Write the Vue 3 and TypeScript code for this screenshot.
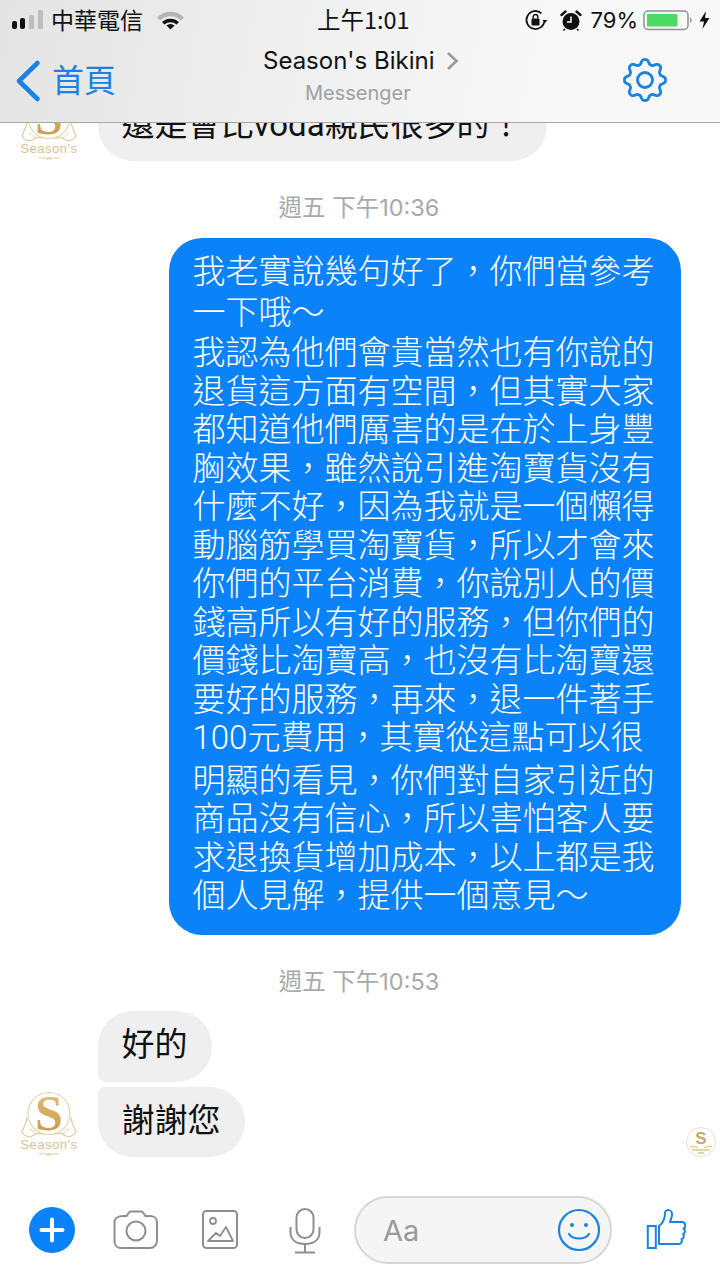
<script setup lang="ts">
const sentLines: { text: string; wide?: boolean; wider?: boolean }[] = [
  { text: '我老實說幾句好了，你們當參考' },
  { text: '一下哦～', wide: true },
  { text: '我認為他們會貴當然也有你說的', wide: true },
  { text: '退貨這方面有空間，但其實大家' },
  { text: '都知道他們厲害的是在於上身豐' },
  { text: '胸效果，雖然說引進淘寶貨沒有' },
  { text: '什麼不好，因為我就是一個懶得' },
  { text: '動腦筋學買淘寶貨，所以才會來' },
  { text: '你們的平台消費，你說別人的價' },
  { text: '錢高所以有好的服務，但你們的' },
  { text: '價錢比淘寶高，也沒有比淘寶還' },
  { text: '要好的服務，再來，退一件著手' },
  { text: '100元費用，其實從這點可以很' },
  { text: '明顯的看見，你們對自家引近的', wider: true },
  { text: '商品沒有信心，所以害怕客人要' },
  { text: '求退換貨增加成本，以上都是我' },
  { text: '個人見解，提供一個意見～' }
]

function gearPath(cx: number, cy: number): string {
  const pts: string[] = []
  const n = 160
  for (let i = 0; i < n; i++) {
    const t = (i / n) * Math.PI * 2
    const wave = Math.max(-0.75, Math.min(0.75, Math.cos(8 * t)))
    const r = 18.3 + 2.9 * wave
    const x = cx + r * Math.sin(t)
    const y = cy - r * Math.cos(t)
    pts.push(`${i === 0 ? 'M' : 'L'}${x.toFixed(2)} ${y.toFixed(2)}`)
  }
  return pts.join(' ') + ' Z'
}
const gear = gearPath(25, 25)
</script>

<template>
  <div class="page">
    <svg class="defs" width="0" height="0" aria-hidden="true">
      <defs>
        <linearGradient id="gold" x1="0" y1="0" x2="0" y2="1">
          <stop offset="0" stop-color="#e6c27e" />
          <stop offset="1" stop-color="#c3964a" />
        </linearGradient>
        <symbol id="logo" viewBox="0 0 60 68">
          <circle cx="29" cy="24.500" r="21" fill="#fff" stroke="#e6d3ad" stroke-width="1.200" />
          <text x="29" y="41" text-anchor="middle" class="logo-s" fill="url(#gold)">S</text>
          <path d="M7 28c0 6-3 9-5 15 3 5 8 6 12 3 3-2 4-2 9-1M51 28c0 6 3 9 5 15-3 5-8 6-12 3-3-2-4-2-9-1" fill="none" stroke="#e3cd9f" stroke-width="1.300" />
          <path d="M9 40c3 1 5 3 6 6M49 40c-3 1-5 3-6 6" fill="none" stroke="#e6d3ad" stroke-width="1" />
          <text x="29" y="60" text-anchor="middle" class="logo-name" fill="#d9c18f">Season's</text>
          <path d="M19 65h20M27 67l2-3 2 3" fill="none" stroke="#e3cd9f" stroke-width="1" />
        </symbol>
      </defs>
    </svg>

    <header class="topbar">
      <div class="status">
        <div class="status-left">
          <svg class="signal" width="32" height="20" viewBox="0 0 32 20">
            <rect x="0" y="11" width="5" height="8" rx="2" fill="#111" />
            <rect x="8" y="8" width="5" height="11" rx="2" fill="#111" />
            <rect x="17" y="5" width="5" height="14" rx="1.500" fill="#bdbdbd" />
            <rect x="26" y="0" width="5" height="19" rx="1.500" fill="#bdbdbd" />
          </svg>
          <span class="carrier">中華電信</span>
          <svg class="wifi" width="27" height="20" viewBox="0 0 27 20">
            <path d="M0 7.500a19 19 0 0 1 27 0l-3 3a15 15 0 0 0-21 0z" fill="#b4b4b4" />
            <path d="M5 12a12.500 12.500 0 0 1 17 0l-2.500 2.500a9 9 0 0 0-12 0z" fill="#111" />
            <path d="M9.500 15.500a6 6 0 0 1 8 0l-4 4z" fill="#111" />
          </svg>
        </div>
        <span class="clock">上午1:01</span>
        <div class="status-right">
          <svg class="lock" width="24" height="24" viewBox="0 0 24 24">
            <path d="M20.500 12a9 9 0 1 1-3-6.700" fill="none" stroke="#111" stroke-width="1.800" />
            <path d="M18.500 12h5l-2.500 3z" fill="#111" />
            <rect x="7.500" y="10.500" width="8" height="7" rx="1" fill="#111" />
            <path d="M9.200 10.500V8.800a2.300 2.300 0 0 1 4.600 0v1.700" fill="none" stroke="#111" stroke-width="1.500" />
          </svg>
          <svg class="alarm" width="22" height="22" viewBox="0 0 22 22">
            <circle cx="11" cy="12.500" r="8.500" fill="#111" />
            <path d="M11 7.500v5.500H7" fill="none" stroke="#fff" stroke-width="1.500" />
            <path d="M1.500 6l4-3.500M20.500 6l-4-3.500" stroke="#111" stroke-width="2.400" stroke-linecap="round" />
            <path d="M5 20l-1.500 1.500M17 20l1.500 1.500" stroke="#111" stroke-width="1.600" />
          </svg>
          <span class="percent">79%</span>
          <svg class="battery" width="50" height="21" viewBox="0 0 50 21">
            <rect x="1" y="1" width="44" height="18.500" rx="4" fill="none" stroke="#8f8f8f" stroke-width="1.500" />
            <rect x="4" y="4" width="30.500" height="12.500" rx="1" fill="#4cd964" />
            <path d="M47 7.500c2 .5 2 5 0 5.500z" fill="#8f8f8f" />
          </svg>
          <svg class="bolt" width="11" height="18" viewBox="0 0 11 18">
            <path d="M7 0L0.500 10.500H5L3.500 18L10.500 7H6z" fill="#111" />
          </svg>
        </div>
      </div>
      <div class="nav">
        <div class="back">
          <svg width="28" height="44" viewBox="0 0 28 44">
            <path d="M23.500 4L5 22 23.500 40" fill="none" stroke="#1a82e2" stroke-width="4.600" stroke-linecap="round" stroke-linejoin="round" />
          </svg>
          <span class="back-label">首頁</span>
        </div>
        <div class="title">
          <div class="name">Season's Bikini
            <svg width="13" height="20" viewBox="0 0 13 20">
              <path d="M2 2l8.500 8L2 18" fill="none" stroke="#9a9a9a" stroke-width="2.600" />
            </svg>
          </div>
          <div class="sub">Messenger</div>
        </div>
        <svg class="gear" width="50" height="50" viewBox="0 0 50 50">
          <path :d="gear" fill="none" stroke="#1a82e2" stroke-width="2.800" stroke-linejoin="round" />
          <circle cx="25" cy="25" r="7.500" fill="none" stroke="#1a82e2" stroke-width="2.800" />
        </svg>
      </div>
    </header>

    <main class="chat">
      <div class="row">
        <svg class="avatar" width="60" height="68"><use href="#logo" /></svg>
        <div class="bubble">還是會比voda親民很多的！</div>
      </div>

      <div class="time">週五 下午10:36</div>

      <div class="sent">
        <div
          v-for="(line, i) in sentLines"
          :key="i"
          class="sent-line"
          :class="{ wide: line.wide, wider: line.wider }"
        >{{ line.text }}</div>
      </div>

      <div class="time second">週五 下午10:53</div>

      <div class="row">
        <svg class="avatar" width="60" height="68"><use href="#logo" /></svg>
        <div class="group">
          <div class="bubble first">好的</div>
          <div class="bubble last">謝謝您</div>
        </div>
        <svg class="seen" width="30" height="30" viewBox="0 0 30 30">
          <circle cx="15" cy="15" r="14.500" fill="#fff" stroke="#e4e0d6" />
          <text x="15" y="17" text-anchor="middle" class="seen-s" fill="#c6a862">S</text>
          <path d="M4 20c3-2 6 1 8 0M26 20c-3-2-6 1-8 0M6 23h18M12 26h6" fill="none" stroke="#dcc793" stroke-width="1.300" />
        </svg>
      </div>
    </main>

    <footer class="composer">
      <svg width="46" height="46" viewBox="0 0 46 46">
        <circle cx="23" cy="23" r="23" fill="#0a82fa" />
        <path d="M23 12.500v21M12.500 23h21" stroke="#fff" stroke-width="4" stroke-linecap="round" />
      </svg>
      <svg width="48" height="40" viewBox="0 0 48 40">
        <path d="M11 6h3.500l2.500-3.500c.5-.7 1-1 2-1h10c1 0 1.500.3 2 1L33.500 6H38c3.500 0 7 2 7 6v19c0 4-3 7-7 7H9c-4 0-6.500-3-6.500-7V12c0-4 4-6 8.500-6z" fill="none" stroke="#8e8e8e" stroke-width="2" />
        <circle cx="24" cy="21" r="9.500" fill="none" stroke="#8e8e8e" stroke-width="2" />
      </svg>
      <svg width="46" height="40" viewBox="0 0 46 40">
        <rect x="6" y="1" width="34" height="37" rx="3.500" fill="none" stroke="#8e8e8e" stroke-width="2" />
        <circle cx="16" cy="11" r="3" fill="none" stroke="#8e8e8e" stroke-width="1.800" />
        <path d="M11 31l8-8 4 3 6-9 7 14z" fill="none" stroke="#8e8e8e" stroke-width="1.800" stroke-linejoin="round" />
      </svg>
      <svg class="mic" width="48" height="46" viewBox="0 0 48 46">
        <rect x="15.500" y="1" width="17" height="29" rx="8.500" fill="none" stroke="#8e8e8e" stroke-width="2" />
        <path d="M9.500 19v5c0 8 6 12 14.500 12s14.500-4 14.500-12v-5M24 36v8M14 44.500h20" fill="none" stroke="#8e8e8e" stroke-width="2" />
      </svg>
      <div class="input">
        <span class="placeholder">Aa</span>
        <svg width="44" height="44" viewBox="0 0 44 44">
          <circle cx="22" cy="22" r="20" fill="none" stroke="#1a82e2" stroke-width="2.200" />
          <circle cx="15" cy="17" r="2" fill="#1a82e2" />
          <circle cx="29" cy="17" r="2" fill="#1a82e2" />
          <path d="M12 26c4 6 16 6 20 0" fill="none" stroke="#1a82e2" stroke-width="2.200" stroke-linecap="round" />
        </svg>
      </div>
      <svg class="thumb" width="44" height="44" viewBox="0 0 44 44">
        <rect x="2.800" y="18" width="8" height="22" fill="none" stroke="#1a82e2" stroke-width="2" />
        <path d="M14 18c4-3 6-8 6-13 0-4 7-4 7 1 0 4-1.500 6-2 8h12c4 0 4 6 1.500 6.500 2 1 2 5-.5 5.500 1.500 1.500 1 5-1.500 5 1 2 0 5-3 5H14z" fill="none" stroke="#1a82e2" stroke-width="2" stroke-linejoin="round" />
      </svg>
    </footer>
  </div>
</template>

<style scoped>
.page {
  position: relative;
  width: 720px;
  height: 1280px;
  overflow: hidden;
  display: flex;
  flex-direction: column;
  background: #fff;
  font-family: "Noto Sans CJK TC", sans-serif;
  color: #111;
}
.defs {
  position: absolute;
}
.topbar {
  position: absolute;
  top: 0;
  left: 0;
  right: 0;
  z-index: 2;
  height: 123px;
  box-sizing: border-box;
  border-bottom: 1px solid #a8a8a8;
  background: linear-gradient(100deg, #e4e4e4 0%, #efefef 40%, #f8f8f8 75%);
}
.status {
  position: relative;
  height: 40px;
  display: flex;
  align-items: center;
  justify-content: space-between;
  padding: 0 10px 0 12px;
}
.status-left,
.status-right {
  display: flex;
  align-items: center;
}
.carrier {
  margin: -3px 0 0 7px;
  font-size: 23px;
}
.wifi {
  margin-left: 14px;
}
.clock {
  position: absolute;
  left: 317px;
  top: 2px;
  font-size: 23.500px;
}
.lock {
  margin-right: 12px;
}
.alarm {
  margin-right: 9px;
}
.percent {
  font-family: Inter, sans-serif;
  font-size: 22px;
  margin-right: 5px;
}
.bolt {
  margin-left: 6px;
}
.nav {
  position: relative;
  height: 82px;
  display: flex;
  align-items: center;
  justify-content: space-between;
  padding: 0 50px 0 14px;
}
.back {
  display: flex;
  align-items: center;
  gap: 10px;
  color: #1a82e2;
}
.back-label {
  margin-top: -6px;
  font-size: 32px;
}
.gear {
  margin-top: -2px;
}
.title {
  position: absolute;
  left: 263px;
  top: 4px;
}
.name {
  font-family: Inter, sans-serif;
  font-size: 24px;
  line-height: 34px;
  white-space: nowrap;
  display: flex;
  align-items: center;
  gap: 12px;
}
.sub {
  margin-top: 2px;
  margin-left: 42px;
  font-family: Inter, sans-serif;
  font-size: 20px;
  line-height: 26px;
  color: #a0a0a0;
}
.chat {
  flex: 1;
  padding-top: 91px;
}
.row {
  display: flex;
  align-items: flex-end;
  padding: 0 4px 0 20px;
}
.avatar {
  flex: none;
  margin-right: 18px;
}
.bubble {
  box-sizing: border-box;
  width: fit-content;
  height: 70px;
  line-height: 68px;
  padding: 0 24.500px 0 23.500px;
  border-radius: 35px;
  background: #efefef;
  font-size: 33px;
  font-family: Roboto, "Noto Sans CJK TC", sans-serif;
  white-space: nowrap;
}
.bubble.first {
  height: 71px;
  line-height: 67px;
  border-bottom-left-radius: 6px;
}
.bubble.last {
  border-top-left-radius: 6px;
}
.group {
  display: flex;
  flex-direction: column;
  gap: 5px;
}
.seen {
  margin-left: auto;
}
.time {
  margin: 32px 0 15px;
  text-align: center;
  font-size: 23.500px;
  line-height: 30px;
  color: #a9a9a9;
  font-family: Inter, "Noto Sans CJK TC", sans-serif;
  padding-right: 2px;
}
.time.second {
  margin-bottom: 14px;
}
.sent {
  box-sizing: border-box;
  width: 512px;
  margin-left: 169px;
  padding: 15px 0 19px 23.500px;
  border-radius: 33px;
  background: #0a82fa;
  color: #fff;
  font-size: 33px;
  font-weight: 300;
  font-family: Roboto, "Noto Sans CJK TC", sans-serif;
}
.sent-line {
  height: 38.500px;
  line-height: 38.500px;
  white-space: nowrap;
}
.sent-line.wide {
  margin-top: 2px;
}
.sent-line.wider {
  margin-top: 4px;
}
.composer {
  flex: none;
  height: 100px;
  box-sizing: border-box;
  padding-left: 29px;
  display: flex;
  align-items: center;
  gap: 37px;
}
.mic {
  margin: 2px 0 0 1px;
}
.input {
  box-sizing: border-box;
  flex: none;
  width: 258px;
  height: 68px;
  margin-left: -12px;
  padding: 0 9px 0 27px;
  display: flex;
  align-items: center;
  justify-content: space-between;
  border: 2px solid #d6d6d6;
  border-radius: 34px;
  background: #f5f5f5;
}
.placeholder {
  font-family: Inter, sans-serif;
  font-size: 29px;
  color: #9a9a9a;
}
.thumb {
  margin-left: -4px;
}
</style>

<style>
.logo-s {
  font-family: "Liberation Serif", serif;
  font-size: 50px;
  font-weight: 700;
}
.logo-name {
  font-family: "Liberation Sans", sans-serif;
  font-size: 13px;
  letter-spacing: 0.500px;
}
.seen-s {
  font-family: "Liberation Sans", sans-serif;
  font-size: 17px;
  font-weight: 700;
}
</style>
